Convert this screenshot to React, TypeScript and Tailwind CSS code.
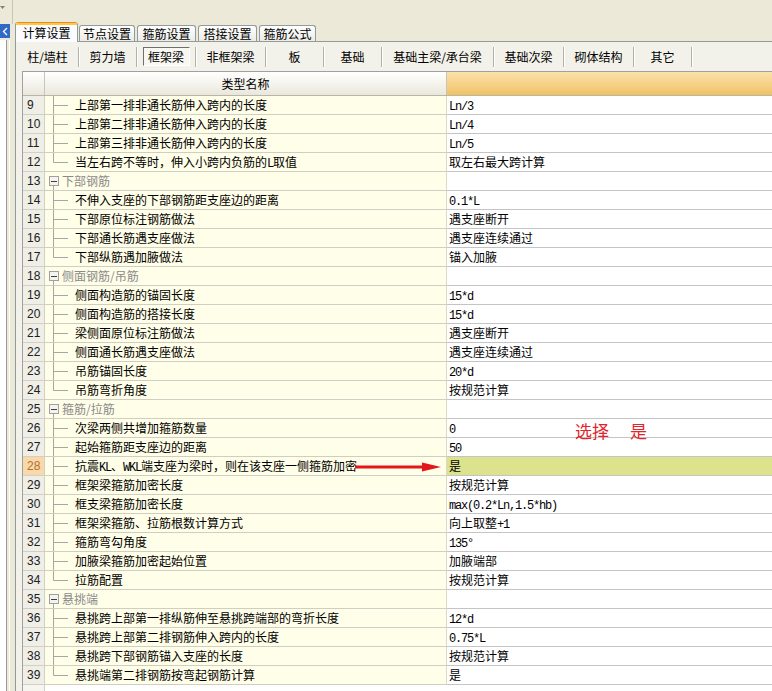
import React from "react";

type Row = { n: number; name: string; value?: string; group?: boolean; last?: boolean; hl?: boolean };

const rows: Row[] = [
  { n: 9, name: "上部第一排非通长筋伸入跨内的长度", value: "Ln/3" },
  { n: 10, name: "上部第二排非通长筋伸入跨内的长度", value: "Ln/4" },
  { n: 11, name: "上部第三排非通长筋伸入跨内的长度", value: "Ln/5" },
  { n: 12, name: "当左右跨不等时，伸入小跨内负筋的L取值", value: "取左右最大跨计算", last: true },
  { n: 13, name: "下部钢筋", group: true },
  { n: 14, name: "不伸入支座的下部钢筋距支座边的距离", value: "0.1*L" },
  { n: 15, name: "下部原位标注钢筋做法", value: "遇支座断开" },
  { n: 16, name: "下部通长筋遇支座做法", value: "遇支座连续通过" },
  { n: 17, name: "下部纵筋遇加腋做法", value: "锚入加腋", last: true },
  { n: 18, name: "侧面钢筋/吊筋", group: true },
  { n: 19, name: "侧面构造筋的锚固长度", value: "15*d" },
  { n: 20, name: "侧面构造筋的搭接长度", value: "15*d" },
  { n: 21, name: "梁侧面原位标注筋做法", value: "遇支座断开" },
  { n: 22, name: "侧面通长筋遇支座做法", value: "遇支座连续通过" },
  { n: 23, name: "吊筋锚固长度", value: "20*d" },
  { n: 24, name: "吊筋弯折角度", value: "按规范计算", last: true },
  { n: 25, name: "箍筋/拉筋", group: true },
  { n: 26, name: "次梁两侧共增加箍筋数量", value: "0" },
  { n: 27, name: "起始箍筋距支座边的距离", value: "50" },
  { n: 28, name: "抗震KL、WKL端支座为梁时，则在该支座一侧箍筋加密", value: "是", hl: true },
  { n: 29, name: "框架梁箍筋加密长度", value: "按规范计算" },
  { n: 30, name: "框支梁箍筋加密长度", value: "max(0.2*Ln,1.5*hb)" },
  { n: 31, name: "框架梁箍筋、拉筋根数计算方式", value: "向上取整+1" },
  { n: 32, name: "箍筋弯勾角度", value: "135°" },
  { n: 33, name: "加腋梁箍筋加密起始位置", value: "加腋端部" },
  { n: 34, name: "拉筋配置", value: "按规范计算", last: true },
  { n: 35, name: "悬挑端", group: true },
  { n: 36, name: "悬挑跨上部第一排纵筋伸至悬挑跨端部的弯折长度", value: "12*d" },
  { n: 37, name: "悬挑跨上部第二排钢筋伸入跨内的长度", value: "0.75*L" },
  { n: 38, name: "悬挑跨下部钢筋锚入支座的长度", value: "按规范计算" },
  { n: 39, name: "悬挑端第二排钢筋按弯起钢筋计算", value: "是", last: true },
];

const subTabs: { label: string; w: string; pressed?: boolean }[] = [
  { label: "柱/墙柱", w: "w-[62px]" },
  { label: "剪力墙", w: "w-[58px]" },
  { label: "框架梁", w: "w-[59px]", pressed: true },
  { label: "非框架梁", w: "w-[70px]" },
  { label: "板", w: "w-[58px]" },
  { label: "基础", w: "w-[58px]" },
  { label: "基础主梁/承台梁", w: "w-[112px]" },
  { label: "基础次梁", w: "w-[70px]" },
  { label: "砌体结构", w: "w-[70px]" },
  { label: "其它", w: "w-[58px]" },
];

const tabs: { label: string; w: string }[] = [
  { label: "节点设置", w: "w-[56px]" },
  { label: "箍筋设置", w: "w-[59px]" },
  { label: "搭接设置", w: "w-[59px]" },
  { label: "箍筋公式", w: "w-[57px]" },
];

function Mixed({ text }: { text: string }) {
  const parts = text.split(/([\x20-\x7e°]+)/).filter((p) => p.length > 0);
  return (
    <>
      {parts.map((p, i) =>
        /^[\x20-\x7e°]+$/.test(p) ? (
          <span key={i} className="font-['Liberation_Mono',monospace] text-[12px] tracking-[-1.2px]">
            {p}
          </span>
        ) : (
          <span key={i}>{p}</span>
        )
      )}
    </>
  );
}

function TreeChild({ last }: { last?: boolean }) {
  return (
    <svg width="30" height="18" className="shrink-0">
      <line x1="8.5" y1="0" x2="8.5" y2={last ? 9.5 : 18} stroke="#A6A6A6" />
      <line x1="8.5" y1="9.5" x2="23" y2="9.5" stroke="#A6A6A6" />
    </svg>
  );
}

function TreeGroup() {
  return (
    <svg width="17" height="18" className="shrink-0">
      <line x1="8.5" y1="14" x2="8.5" y2="18" stroke="#A6A6A6" />
      <rect x="4.5" y="4.5" width="9" height="9" fill="#F4F3EE" stroke="#A0A0A0" />
      <line x1="6" y1="9.5" x2="12" y2="9.5" stroke="#404040" />
    </svg>
  );
}

export default function App() {
  return (
    <div className="relative w-[772px] h-[691px] overflow-hidden bg-[#ECE9D8] flex font-['Noto_Sans_CJK_SC',sans-serif] text-[12px] text-black">
      {/* left strip */}
      <div className="w-[15px] shrink-0 flex flex-col">
        <div className="h-[24px] relative flex">
          <div className="w-[12px] flex items-start pt-[6px]">
            <svg width="6" height="4">
              <polygon points="0,0 5,0 2.5,3" fill="#808080" />
            </svg>
          </div>
          <div className="w-px bg-[#C8C5B4]" />
        </div>
        <div className="h-[14px] w-[10px] bg-[#3169C6] flex items-center justify-center">
          <svg width="6" height="9">
            <polyline points="5,1 1.5,4.5 5,8" fill="none" stroke="#FFFFFF" strokeWidth="1.3" />
          </svg>
        </div>
        <div className="h-[2px]" />
        <div className="flex-1 flex">
          <div className="w-[7px] bg-white border-r border-[#9A9A9A]" />
          <div className="w-[2px]" />
          <div className="w-px bg-[#FFFFFF]" />
          <div className="flex-1" />
        </div>
      </div>

      {/* main */}
      <div className="flex-1 flex flex-col min-w-0">
        <div className="h-[22px] shrink-0" />
        {/* tabs */}
        <div className="h-[19px] shrink-0 flex items-end relative z-10">
          <div className="w-[63px] h-[20px] -mb-px bg-[#FCFCFE] border-x border-[#919B9C] rounded-t-[3px] flex flex-col overflow-hidden">
            <div className="h-px bg-[#E68B2C]" />
            <div className="h-[2px] bg-[#FFC73C]" />
            <div className="flex-1 flex items-center justify-center text-[12px] leading-none pb-[1px]">计算设置</div>
          </div>
          <div className="w-px" />
          {tabs.map((t) => (
            <div
              key={t.label}
              className={`${t.w} h-[16px] mr-[2px] border-x border-t border-[#919B9C] rounded-t-[3px] bg-gradient-to-b from-white to-[#ECEBE6] flex items-center justify-center text-[12px] leading-none`}
            >
              {t.label}
            </div>
          ))}
        </div>
        {/* panel */}
        <div className="flex-1 flex flex-col border-t border-l border-[#919B9C] bg-[#F3F2EA] min-h-0">
          {/* sub tabs */}
          <div className="h-[29px] shrink-0 flex items-center pl-px">
            {subTabs.map((s) => (
              <div key={s.label} className={`${s.w} h-[20px] flex items-center justify-center border-r border-[#B4B2A6] shadow-[1px_0_0_#FFFFFF]`}>
                {s.pressed ? (
                  <div className="w-[47px] h-[19px] flex items-center justify-center border border-t-[#6F6F6F] border-l-[#6F6F6F] border-r-white border-b-white bg-[#F8F7F2] text-[12px] leading-none">
                    {s.label}
                  </div>
                ) : (
                  <span className="text-[12px] leading-none">{s.label}</span>
                )}
              </div>
            ))}
          </div>
          {/* grid area */}
          <div className="flex-1 flex pl-[6px] min-h-0">
            <div className="flex-1 flex flex-col border-l border-t border-[#A0A0A0] bg-white min-w-0">
              {/* header */}
              <div className="h-[24px] shrink-0 flex border-b border-[#B8B6A8]">
                <div className="w-[22px] shrink-0 border-r border-[#C8C6B8] bg-gradient-to-b from-white to-[#EAE8DC]" />
                <div className="w-[402px] shrink-0 border-r border-[#C8C6B8] bg-gradient-to-b from-white to-[#EAE8DC] flex items-center justify-center text-[12px]">
                  类型名称
                </div>
                <div className="flex-1 bg-gradient-to-b from-[#FBE2AA] to-[#F1C264]" />
              </div>
              {rows.map((r) => (
                <div key={r.n} className="h-[19px] shrink-0 flex">
                  <div
                    className={`w-[22px] shrink-0 border-r border-b border-[#D2D0C4] pl-[4px] font-['Liberation_Sans',sans-serif] text-[12px] leading-[18px] ${
                      r.hl ? "bg-[#F9D8A9] text-[#B0702E]" : "bg-[#EFEEE7] text-[#202020]"
                    }`}
                  >
                    {r.n}
                  </div>
                  <div className="w-[402px] shrink-0 border-r border-b border-r-[#DCD9C6] border-b-[#D0CEC2] bg-[#FFFEE8] flex items-start whitespace-nowrap overflow-hidden">
                    {r.group ? (
                      <>
                        <TreeGroup />
                        <span className="leading-[18px] text-[#8A8A8A]">{r.name}</span>
                      </>
                    ) : (
                      <>
                        <TreeChild last={r.last} />
                        <span className="leading-[18px]">
                          <Mixed text={r.name} />
                        </span>
                      </>
                    )}
                  </div>
                  <div
                    className={`flex-1 border-b border-[#C4C4C4] pl-[2px] whitespace-nowrap overflow-hidden leading-[18px] ${
                      r.hl ? "bg-[#DDE38C]" : "bg-white"
                    }`}
                  >
                    {r.value ? <Mixed text={r.value} /> : null}
                  </div>
                </div>
              ))}
              <div className="flex-1 flex">
                <div className="w-[22px] shrink-0 border-r border-[#D2D0C4] bg-[#F6F5F0]" />
                <div className="w-[402px] shrink-0 bg-white" />
                <div className="flex-1 bg-white" />
              </div>
            </div>
          </div>
        </div>
      </div>

      {/* red annotations */}
      <svg className="absolute left-[355px] top-[460px]" width="90" height="14">
        <line x1="0" y1="7" x2="70" y2="7" stroke="#E3161B" strokeWidth="3" />
        <polygon points="67,2.5 86,7 67,11.5" fill="#E3161B" />
      </svg>
      <div className="absolute left-[575px] top-[421px] text-[17px] leading-[20px] text-[#E2262B] whitespace-nowrap">
        <span>选择</span>
        <span className="ml-[21px]">是</span>
      </div>
    </div>
  );
}
